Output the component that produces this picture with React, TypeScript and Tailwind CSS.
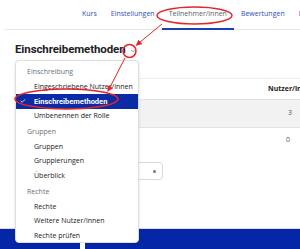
import React from 'react';
import { Check, ChevronDown } from 'lucide-react';

type MenuEntry = { label: string; header?: boolean; active?: boolean; first?: boolean };

const menu: MenuEntry[] = [
  { label: 'Einschreibung', header: true, first: true },
  { label: 'Eingeschriebene Nutzer/innen' },
  { label: 'Einschreibemethoden', active: true },
  { label: 'Umbenennen der Rolle' },
  { label: 'Gruppen', header: true },
  { label: 'Gruppen' },
  { label: 'Gruppierungen' },
  { label: 'Überblick' },
  { label: 'Rechte', header: true },
  { label: 'Rechte' },
  { label: 'Weitere Nutzer/innen' },
  { label: 'Rechte prüfen' },
];

const tabs = [
  { name: 'Kurs' },
  { name: 'Einstellungen' },
  { name: 'Teilnehmer/innen', active: true },
  { name: 'Bewertungen' },
  { name: 'Be' },
];

const App: React.FC = () => {
  return (
    <div className="relative w-[300px] h-[249px] overflow-hidden bg-white flex flex-col font-['Open_Sans',sans-serif] text-[#1d2125]">
      {/* Secondary navigation */}
      <nav className="h-[30px] shrink-0 ml-[5px] border-b border-[#e6e6e6] flex items-stretch pl-[70px] whitespace-nowrap">
        {tabs.map((tab) => (
          <div
            key={tab.name}
            className={`px-[7px] flex items-center text-[7px] border-b-[2px] -mb-px ${
              tab.active ? 'border-[#1c3fb8] text-[#5a5f66]' : 'border-transparent text-[#2f4fbf]'
            }`}
          >
            {tab.name}
          </div>
        ))}
      </nav>

      {/* Heading */}
      <div className="mt-[11px] ml-[15px] flex items-center h-[17px]">
        <h2 className="font-['Roboto',sans-serif] text-[11.5px] font-bold leading-none tracking-[-0.1px]">
          Einschreibemethoden
        </h2>
        <ChevronDown size={6} strokeWidth={3} className="ml-[4px] mt-[3px] text-[#6a737b]" />
      </div>

      {/* Table */}
      <div className="mt-[20px] ml-[15px] border-t border-[#ececec] text-[7px]">
        <div className="h-[21px] flex items-center border-b border-[#e2e2e2]">
          <div className="flex-1" />
          <div className="w-[32px] font-bold whitespace-nowrap">Nutzer/in</div>
        </div>
        <div className="h-[28px] flex items-center bg-[#f2f2f2] border-b border-[#e2e2e2]">
          <div className="flex-1" />
          <div className="w-[12px] text-[#555]">3</div>
        </div>
        <div className="h-[24px] flex items-center">
          <div className="flex-1" />
          <div className="w-[14px] text-[#555]">0</div>
        </div>
      </div>

      {/* Paging select */}
      <div className="mt-[10px] ml-[60px] w-[103px] h-[18px] border border-[#d8d8d8] rounded-[4px] flex items-center justify-end pr-[6px]">
        <span className="w-[3px] h-[3px] rounded-full bg-[#777]" />
      </div>

      {/* Footer */}
      <footer className="mt-auto h-[21px] border-t border-[#dcdcdc] bg-[#0427a8]" />

      {/* Dropdown menu */}
      <div className="absolute left-[15px] top-[60px] w-[124px] h-[183px] bg-white border border-[#dedede] rounded-[4px] shadow-[0_1px_3px_rgba(0,0,0,0.12)] pt-[4px] text-[7px] whitespace-nowrap overflow-hidden">
        {menu.map((item, i) => (
          <div
            key={i}
            className={`h-[14.5px] flex items-center ${item.header && !item.first ? 'mt-[2px]' : ''} ${
              item.header
                ? 'pl-[11px] text-[#6a737b]'
                : item.active
                ? "pl-[4px] bg-[#0b2ba6] text-white font-bold font-['Roboto',sans-serif] text-[7.5px]"
                : 'pl-[18px] text-[#1d2125]'
            }`}
          >
            {item.active && <Check size={6} strokeWidth={3} className="mr-[8px]" />}
            {item.label}
          </div>
        ))}
      </div>
      <div className="absolute left-[80px] top-[243px] w-[5px] h-[6px] bg-white" />

      {/* Annotations */}
      <svg className="absolute inset-0 pointer-events-none" width="300" height="249" viewBox="0 0 300 249">
        <defs>
          <marker id="head" markerWidth="6" markerHeight="6" refX="5" refY="3" orient="auto" markerUnits="userSpaceOnUse">
            <path d="M0,0 L6,3 L0,6 z" fill="#e3262b" />
          </marker>
        </defs>
        <ellipse cx="194.5" cy="15.5" rx="37.5" ry="8.5" fill="none" stroke="#e3262b" strokeWidth="1.5" />
        <circle cx="129.5" cy="51" r="6.5" fill="none" stroke="#e3262b" strokeWidth="1.5" />
        <ellipse cx="66.5" cy="99" rx="51.5" ry="10" fill="none" stroke="#e3262b" strokeWidth="1.5" />
        <line x1="162" y1="24" x2="136.5" y2="45" stroke="#e3262b" strokeWidth="1" markerEnd="url(#head)" />
        <line x1="125" y1="58" x2="108" y2="91" stroke="#e3262b" strokeWidth="1" markerEnd="url(#head)" />
      </svg>
    </div>
  );
};

export default App;
